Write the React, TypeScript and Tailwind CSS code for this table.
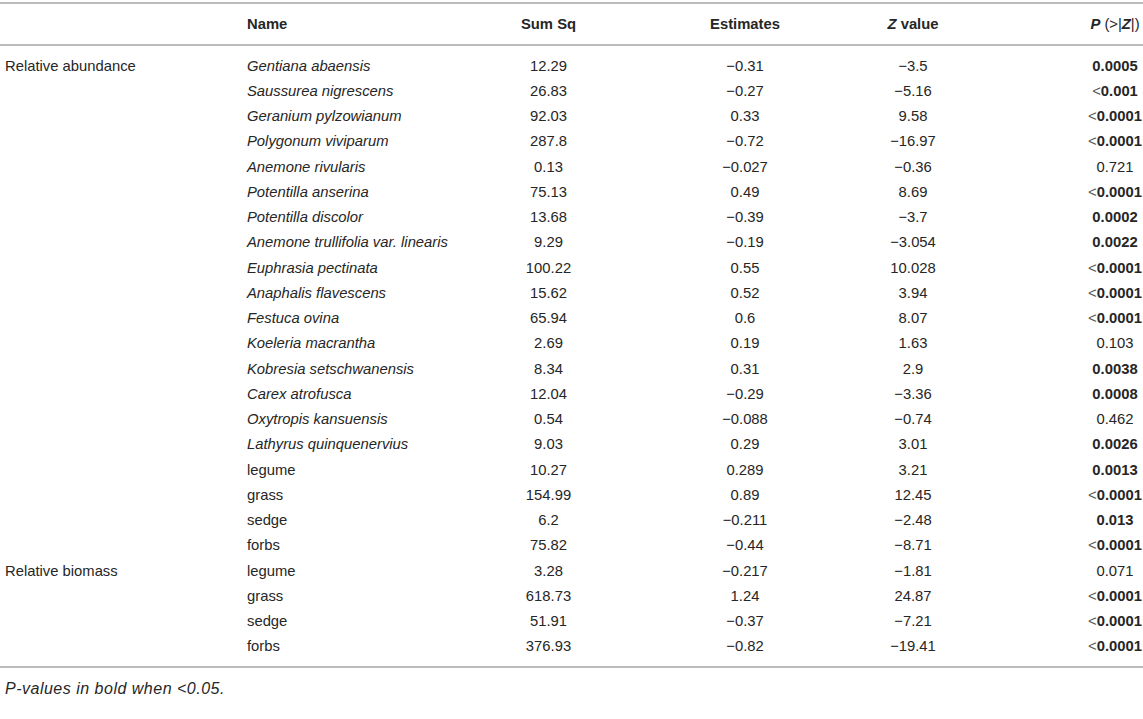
import React from 'react';

type Row = {
  group?: string;
  name: string;
  italic: boolean;
  sumSq: string;
  est: string;
  z: string;
  p: string;
  lt: boolean;
  bold: boolean;
};

const rows: Row[] = [
  { group: 'Relative abundance', name: 'Gentiana abaensis', italic: true, sumSq: '12.29', est: '−0.31', z: '−3.5', p: '0.0005', lt: false, bold: true },
  { name: 'Saussurea nigrescens', italic: true, sumSq: '26.83', est: '−0.27', z: '−5.16', p: '0.001', lt: true, bold: true },
  { name: 'Geranium pylzowianum', italic: true, sumSq: '92.03', est: '0.33', z: '9.58', p: '0.0001', lt: true, bold: true },
  { name: 'Polygonum viviparum', italic: true, sumSq: '287.8', est: '−0.72', z: '−16.97', p: '0.0001', lt: true, bold: true },
  { name: 'Anemone rivularis', italic: true, sumSq: '0.13', est: '−0.027', z: '−0.36', p: '0.721', lt: false, bold: false },
  { name: 'Potentilla anserina', italic: true, sumSq: '75.13', est: '0.49', z: '8.69', p: '0.0001', lt: true, bold: true },
  { name: 'Potentilla discolor', italic: true, sumSq: '13.68', est: '−0.39', z: '−3.7', p: '0.0002', lt: false, bold: true },
  { name: 'Anemone trullifolia var. linearis', italic: true, sumSq: '9.29', est: '−0.19', z: '−3.054', p: '0.0022', lt: false, bold: true },
  { name: 'Euphrasia pectinata', italic: true, sumSq: '100.22', est: '0.55', z: '10.028', p: '0.0001', lt: true, bold: true },
  { name: 'Anaphalis flavescens', italic: true, sumSq: '15.62', est: '0.52', z: '3.94', p: '0.0001', lt: true, bold: true },
  { name: 'Festuca ovina', italic: true, sumSq: '65.94', est: '0.6', z: '8.07', p: '0.0001', lt: true, bold: true },
  { name: 'Koeleria macrantha', italic: true, sumSq: '2.69', est: '0.19', z: '1.63', p: '0.103', lt: false, bold: false },
  { name: 'Kobresia setschwanensis', italic: true, sumSq: '8.34', est: '0.31', z: '2.9', p: '0.0038', lt: false, bold: true },
  { name: 'Carex atrofusca', italic: true, sumSq: '12.04', est: '−0.29', z: '−3.36', p: '0.0008', lt: false, bold: true },
  { name: 'Oxytropis kansuensis', italic: true, sumSq: '0.54', est: '−0.088', z: '−0.74', p: '0.462', lt: false, bold: false },
  { name: 'Lathyrus quinquenervius', italic: true, sumSq: '9.03', est: '0.29', z: '3.01', p: '0.0026', lt: false, bold: true },
  { name: 'legume', italic: false, sumSq: '10.27', est: '0.289', z: '3.21', p: '0.0013', lt: false, bold: true },
  { name: 'grass', italic: false, sumSq: '154.99', est: '0.89', z: '12.45', p: '0.0001', lt: true, bold: true },
  { name: 'sedge', italic: false, sumSq: '6.2', est: '−0.211', z: '−2.48', p: '0.013', lt: false, bold: true },
  { name: 'forbs', italic: false, sumSq: '75.82', est: '−0.44', z: '−8.71', p: '0.0001', lt: true, bold: true },
  { group: 'Relative biomass', name: 'legume', italic: false, sumSq: '3.28', est: '−0.217', z: '−1.81', p: '0.071', lt: false, bold: false },
  { name: 'grass', italic: false, sumSq: '618.73', est: '1.24', z: '24.87', p: '0.0001', lt: true, bold: true },
  { name: 'sedge', italic: false, sumSq: '51.91', est: '−0.37', z: '−7.21', p: '0.0001', lt: true, bold: true },
  { name: 'forbs', italic: false, sumSq: '376.93', est: '−0.82', z: '−19.41', p: '0.0001', lt: true, bold: true },
];

export default function App() {
  return (
    <div
      className="w-[1143px] h-[719px] bg-white text-[#262626] text-[14.8px] pt-[2px]"
      style={{ fontFamily: '"Liberation Sans", Arial, sans-serif' }}
    >
      <table className="w-full table-fixed border-collapse">
        <colgroup>
          <col className="w-[240px]" />
          <col className="w-[210px]" />
          <col className="w-[197px]" />
          <col className="w-[196px]" />
          <col className="w-[140px]" />
          <col className="w-[160px]" />
        </colgroup>
        <thead>
          <tr className="border-t-2 border-b-2 border-[#bcbcbc] h-[42px] font-bold">
            <th />
            <th className="text-left pl-[7px]">Name</th>
            <th className="text-center">Sum Sq</th>
            <th className="text-center">Estimates</th>
            <th className="text-center">
              <i>Z</i> value
            </th>
            <th className="text-center pl-[104px] whitespace-nowrap">
              <i>P</i> <span className="font-normal">(&gt;|</span>
              <i>Z</i>
              <span className="font-normal">|)</span>
            </th>
          </tr>
        </thead>
        <tbody>
          <tr className="h-[8px]">
            <td colSpan={6} />
          </tr>
          {rows.map((r, i) => (
            <tr key={i} className="h-[25.25px]">
              <td className="pl-[5px] whitespace-nowrap">{r.group ?? ''}</td>
              <td className="pl-[7px] whitespace-nowrap">
                {r.italic ? <i>{r.name}</i> : r.name}
              </td>
              <td className="text-center">{r.sumSq}</td>
              <td className="text-center">{r.est}</td>
              <td className="text-center">{r.z}</td>
              <td className="text-center pl-[104px] whitespace-nowrap">
                {r.lt && <span className="text-[#555]">&lt;</span>}
                {r.bold ? <b>{r.p}</b> : r.p}
              </td>
            </tr>
          ))}
          <tr className="h-[8px] border-b-2 border-[#bcbcbc]">
            <td colSpan={6} />
          </tr>
        </tbody>
      </table>
      {/* footnote */}
      <p className="pl-[5px] pt-[9px] italic text-[16px] tracking-[0.5px]">
        P-values in bold when &lt;0.05.
      </p>
    </div>
  );
}
